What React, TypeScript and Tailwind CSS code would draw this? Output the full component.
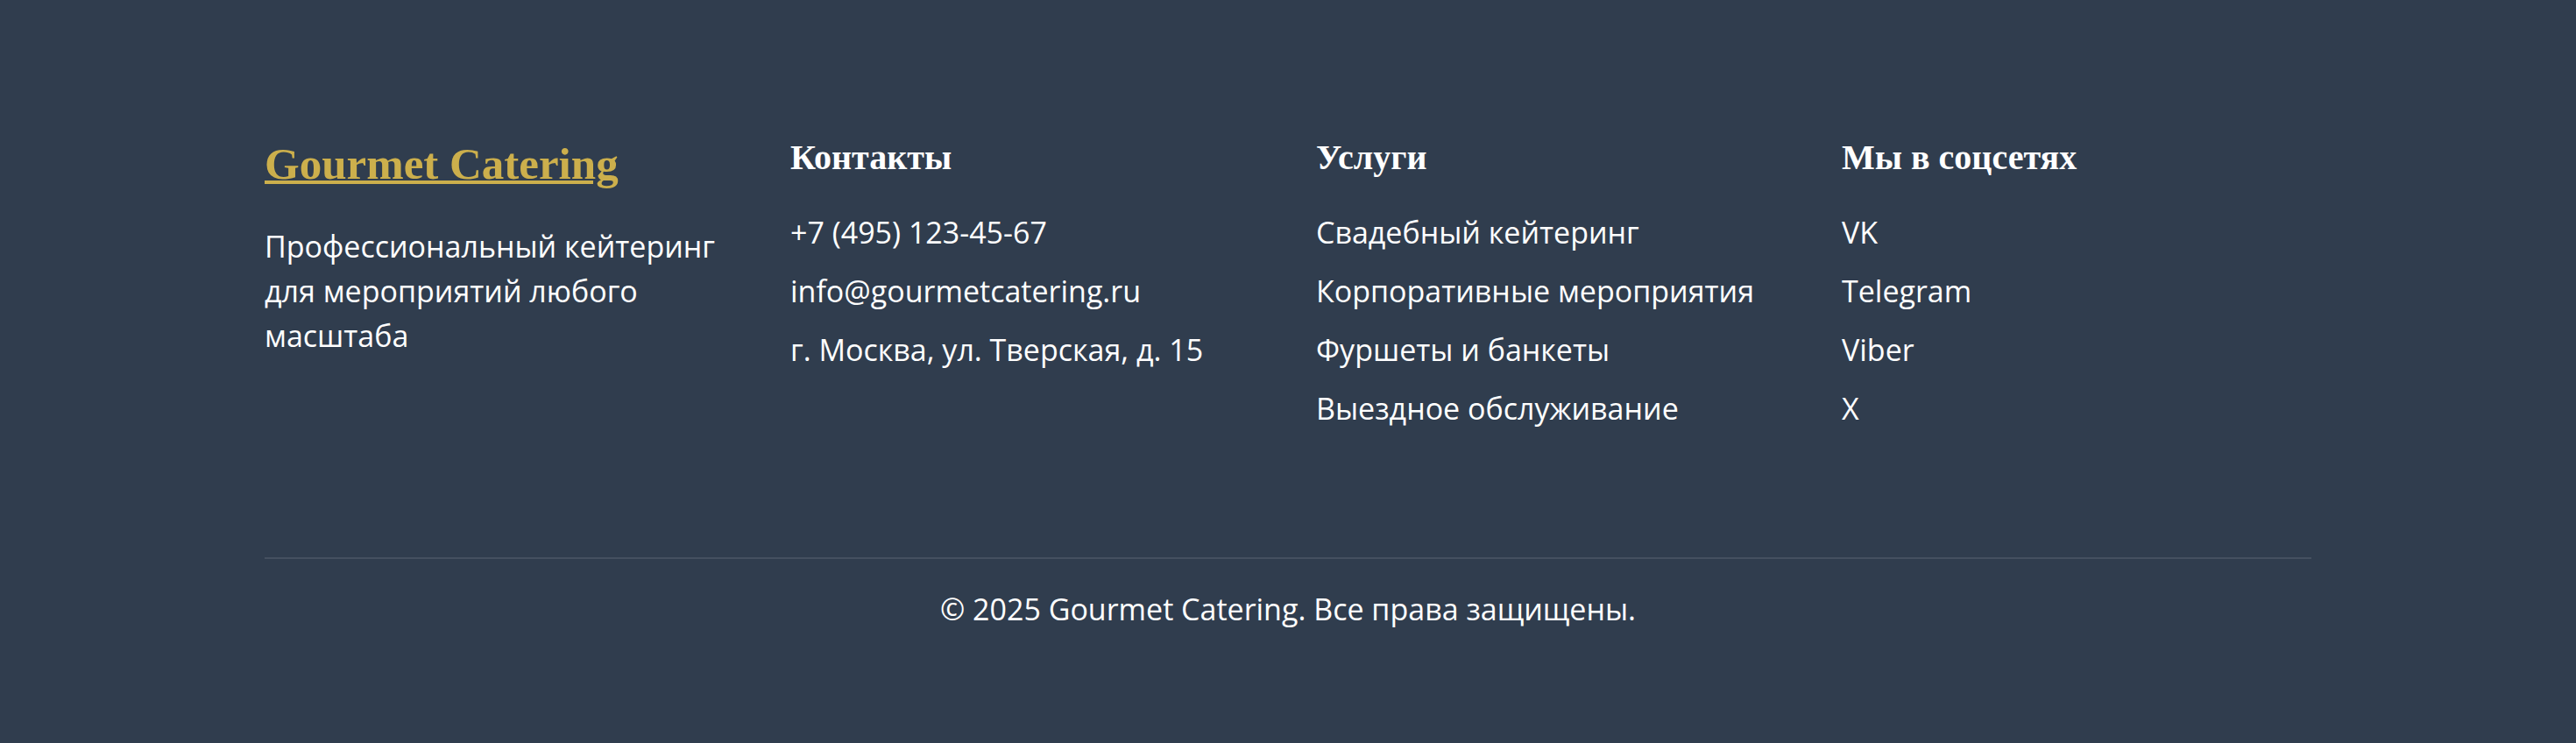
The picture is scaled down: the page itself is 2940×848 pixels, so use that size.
const contacts = [
  { label: "+7 (495) 123-45-67", href: "tel:+74951234567" },
  { label: "info@gourmetcatering.ru", href: "mailto:info@gourmetcatering.ru" },
  { label: "г. Москва, ул. Тверская, д. 15" },
];

const services = [
  { label: "Свадебный кейтеринг", href: "#wedding" },
  { label: "Корпоративные мероприятия", href: "#corporate" },
  { label: "Фуршеты и банкеты", href: "#banquets" },
  { label: "Выездное обслуживание", href: "#outdoor" },
];

const socials = [
  { label: "VK", href: "#vk" },
  { label: "Telegram", href: "#telegram" },
  { label: "Viber", href: "#viber" },
  { label: "X", href: "#x" },
];

type Item = { label: string; href?: string };

function FooterColumn({ title, items }: { title: string; items: Item[] }) {
  return (
    <div>
      <h3 className="mb-[30px] font-['Liberation_Serif',serif] text-[40px] leading-[60px] font-bold">
        {title}
      </h3>
      <ul className="flex flex-col gap-4">
        {items.map((item) => (
          <li key={item.label} className="whitespace-nowrap">
            {item.href ? <a href={item.href}>{item.label}</a> : item.label}
          </li>
        ))}
      </ul>
    </div>
  );
}

export default function App() {
  return (
    <footer className="min-h-screen bg-[#303d4e] px-8 pt-[150px] pb-[120px] font-['Open_Sans',sans-serif] text-[34px] leading-[51px] text-white">
      <div className="mx-auto max-w-[2336px]">
        <div className="grid grid-cols-1 gap-16 md:grid-cols-2 xl:grid-cols-4">
          <div>
            <a
              href="#home"
              className="mb-8 inline-block font-['Liberation_Serif',serif] text-[51px] leading-[74px] font-bold text-[#ccaf4c] underline decoration-4 underline-offset-2"
            >
              Gourmet Catering
            </a>
            <p>Профессиональный кейтеринг для мероприятий любого масштаба</p>
          </div>
          <FooterColumn title="Контакты" items={contacts} />
          <FooterColumn title="Услуги" items={services} />
          <FooterColumn title="Мы в соцсетях" items={socials} />
        </div>
        <div className="mt-36 border-t-2 border-white/10 pt-8 text-center">
          <p>© 2025 Gourmet Catering. Все права защищены.</p>
        </div>
      </div>
    </footer>
  );
}
